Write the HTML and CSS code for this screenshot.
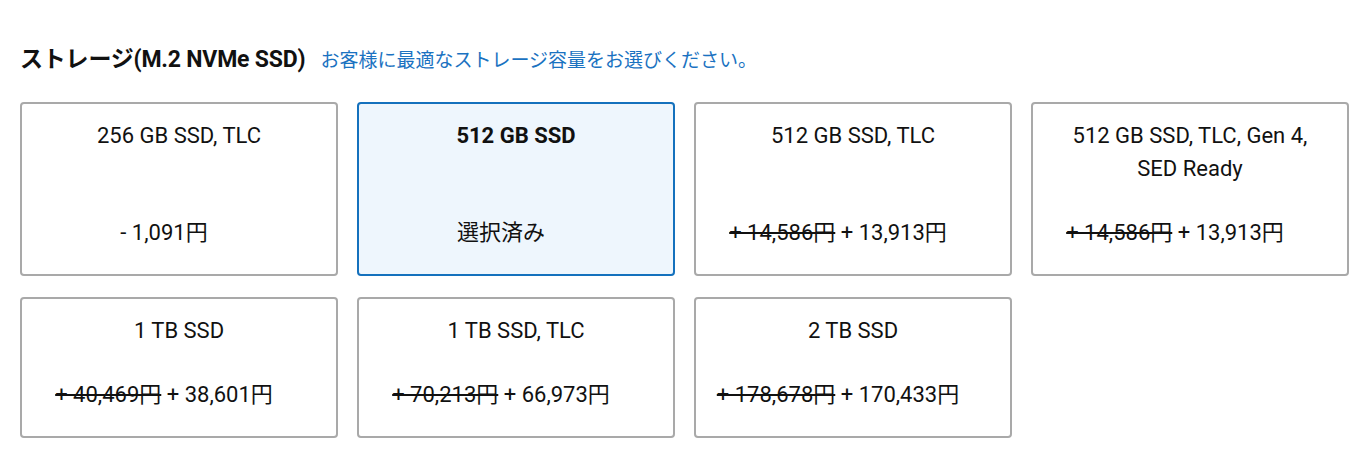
FILE: index.html
```html
<!DOCTYPE html>
<html lang="ja">
<head>
  <meta charset="UTF-8">
  <meta name="viewport" content="width=device-width, initial-scale=1.0">
  <title>ストレージ</title>
  <link rel="stylesheet" href="styles.css">
</head>
<body>
  <!-- Storage option picker -->
  <div class="section">
    <div class="section-head">
      <h2>ストレージ(M.2 NVMe SSD)</h2>
      <span class="hint">お客様に最適なストレージ容量をお選びください。</span>
    </div>

    <div class="options">
      <div class="option">
        <div class="name">256 GB SSD, TLC</div>
        <div class="price">- 1,091円</div>
      </div>
      <div class="option selected">
        <div class="name">512 GB SSD</div>
        <div class="price">選択済み</div>
      </div>
      <div class="option">
        <div class="name">512 GB SSD, TLC</div>
        <div class="price"><s>+ 14,586円</s> + 13,913円</div>
      </div>
      <div class="option">
        <div class="name">512 GB SSD, TLC, Gen 4, SED Ready</div>
        <div class="price"><s>+ 14,586円</s> + 13,913円</div>
      </div>
      <div class="option">
        <div class="name">1 TB SSD</div>
        <div class="price"><s>+ 40,469円</s> + 38,601円</div>
      </div>
      <div class="option">
        <div class="name">1 TB SSD, TLC</div>
        <div class="price"><s>+ 70,213円</s> + 66,973円</div>
      </div>
      <div class="option">
        <div class="name">2 TB SSD</div>
        <div class="price"><s>+ 178,678円</s> + 170,433円</div>
      </div>
    </div>
  </div>
</body>
</html>
```

FILE: styles.css
```css
/* Base */
body {
  margin: 0;
  padding: 0;
  font-family: Roboto, "Noto Sans CJK JP", sans-serif;
  color: #111;
  background-color: #fff;
}

.section {
  padding: 45px 0 0 20px;
}

/* Heading row */
.section-head {
  display: flex;
  align-items: baseline;
  gap: 15px;
  margin-bottom: 28px;
}

.section-head h2 {
  margin: 0;
  font-size: 23px;
  line-height: 28px;
  font-weight: bold;
  letter-spacing: -0.2px;
}

.hint {
  color: #1a72c1;
  font-size: 19px;
  font-family: "Noto Sans CJK JP", sans-serif;
}

/* Option grid */
.options {
  display: grid;
  grid-template-columns: repeat(4, 318px);
  gap: 21px 19px;
}

.option {
  display: flex;
  flex-direction: column;
  border: 2px solid #a9a9a9;
  border-radius: 4px;
  padding: 15px 20px 25px;
  text-align: center;
  font-size: 22px;
  line-height: 33px;
}

.option.selected {
  border-color: #1471bd;
  background-color: #eef6fd;
}

.option.selected .name {
  font-weight: bold;
}

.price {
  margin-top: auto;
  padding-top: 31px;
  padding-right: 30px;
}

.price s {
  text-decoration-thickness: 2px;
}
```
